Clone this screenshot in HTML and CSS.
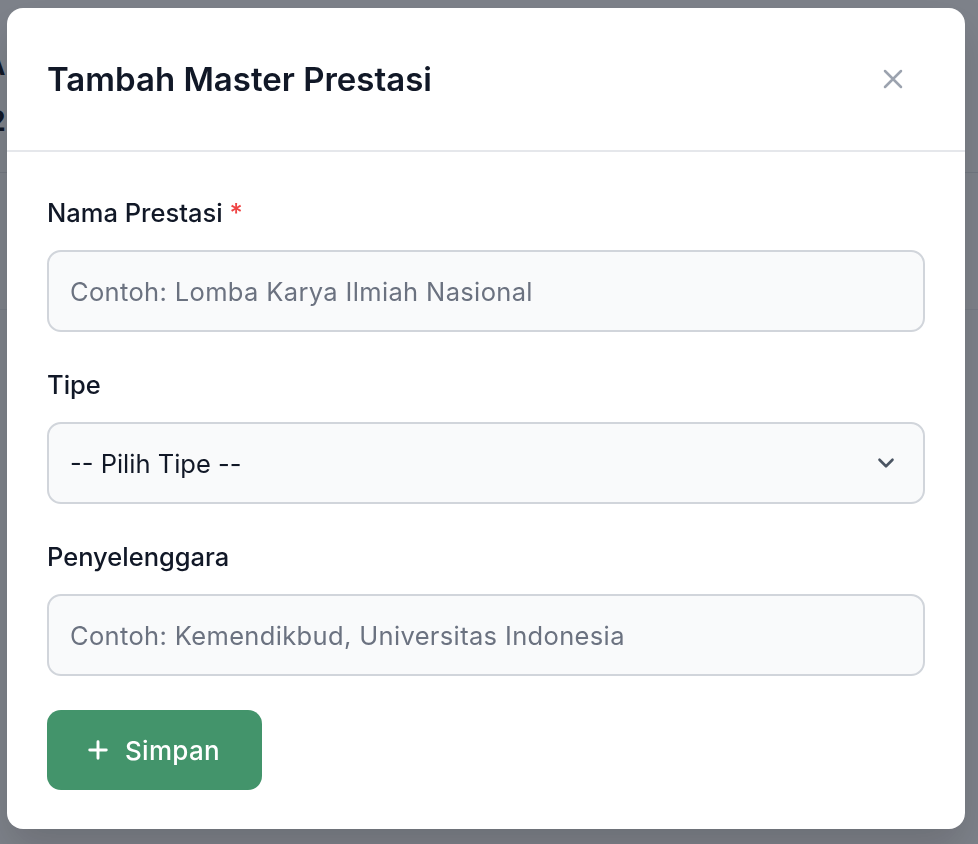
FILE: index.html
```html
<!DOCTYPE html>
<html lang="id">
<head>
  <meta charset="UTF-8">
  <meta name="viewport" content="width=device-width, initial-scale=1.0">
  <title>Master Prestasi</title>
  <link rel="stylesheet" href="styles.css">
</head>
<body>
  <div class="page">
    <div class="page-top">
      <span class="page-title">A</span>
      <span class="page-count">2</span>
    </div>
    <div class="page-bar"></div>
  </div>

  <div class="overlay">
    <div class="modal">
      <div class="modal-header">
        <h2>Tambah Master Prestasi</h2>
        <button class="close-btn" aria-label="Tutup">
          <svg width="32" height="32" viewBox="0 0 24 24" fill="none" stroke="currentColor" stroke-width="1.9" stroke-linecap="round"><path d="M6 6l12 12M18 6L6 18"/></svg>
        </button>
      </div>

      <form class="modal-body">
        <div class="field">
          <label for="nama">Nama Prestasi <span class="req">*</span></label>
          <input type="text" id="nama" placeholder="Contoh: Lomba Karya Ilmiah Nasional">
        </div>

        <div class="field">
          <label for="tipe">Tipe</label>
          <div class="select-wrap">
            <select id="tipe">
              <option>-- Pilih Tipe --</option>
            </select>
            <svg class="chevron" width="26" height="26" viewBox="0 0 24 24" fill="none" stroke="currentColor" stroke-width="2.4" stroke-linecap="round" stroke-linejoin="round"><path d="M6 9l6 6 6-6"/></svg>
          </div>
        </div>

        <div class="field">
          <label for="penyelenggara">Penyelenggara</label>
          <input type="text" id="penyelenggara" placeholder="Contoh: Kemendikbud, Universitas Indonesia">
        </div>

        <button type="button" class="save-btn">
          <svg width="22" height="22" viewBox="0 0 24 24" fill="none" stroke="currentColor" stroke-width="3.2" stroke-linecap="round"><path d="M12 3v18M3 12h18"/></svg>
          Simpan
        </button>
      </form>
    </div>
  </div>
</body>
</html>
```

FILE: styles.css
```css
body {
  font-family: 'Inter', 'Noto Sans', sans-serif;
  margin: 0;
  padding: 0;
  background: #ffffff;
  color: #111827;
}
.page {
  height: 844px;
  overflow: hidden;
}
.page-top {
  height: 172px;
  border-bottom: 1px solid #e5e7eb;
  position: relative;
}
.page-title {
  position: absolute;
  left: -14px;
  top: 50px;
  font-size: 26px;
  font-weight: 700;
}
.page-count {
  position: absolute;
  left: -12px;
  top: 104px;
  font-size: 28px;
  font-weight: 700;
}
.page-bar {
  height: 136px;
  background: #ffffff;
  border-bottom: 1px solid #eef0f3;
}
.overlay {
  position: fixed;
  inset: 0;
  background: rgba(17, 24, 39, 0.54);
}
.modal {
  position: absolute;
  left: 7px;
  top: 8px;
  width: 958px;
  background: #ffffff;
  border-radius: 16px;
  box-shadow: 0 20px 40px rgba(0,0,0,0.15);
}
.modal-header {
  display: flex;
  align-items: center;
  justify-content: space-between;
  height: 144px;
  padding: 0 56px 0 40px;
  border-bottom: 2px solid #e5e7eb;
  box-sizing: border-box;
}
.modal-header h2 {
  margin: 0;
  font-size: 33px;
  font-weight: 600;
  color: #111827;
}
.close-btn {
  border: none;
  background: none;
  padding: 0;
  color: #9ca3af;
  display: flex;
  cursor: pointer;
}
.modal-body {
  padding: 46px 40px 39px;
  display: flex;
  flex-direction: column;
  gap: 38px;
  margin: 0;
}
.field label {
  display: block;
  font-size: 25.5px;
  line-height: 30px;
  font-weight: 500;
  color: #111827;
  margin-bottom: 22px;
}
.req { color: #ef4444; }
.field input,
.field select {
  display: block;
  width: 100%;
  height: 82px;
  box-sizing: border-box;
  padding: 0 21px;
  font-family: inherit;
  font-size: 25.5px;
  color: #111827;
  background: #f9fafb;
  border: 2px solid #d1d5db;
  border-radius: 14px;
  outline: none;
}
.field input::placeholder {
  color: #6b7280;
  letter-spacing: 0.35px;
}
.select-wrap { position: relative; }
.field select {
  appearance: none;
  -webkit-appearance: none;
}
.chevron {
  position: absolute;
  right: 26px;
  top: 28px;
  color: #4b5563;
  pointer-events: none;
}
.save-btn {
  align-self: flex-start;
  display: flex;
  align-items: center;
  gap: 16px;
  margin-top: -4px;
  height: 80px;
  padding: 0 42px 0 40px;
  background: #43946b;
  color: #ffffff;
  border: none;
  border-radius: 14px;
  font-family: inherit;
  font-size: 26px;
  font-weight: 500;
  letter-spacing: 0.3px;
  cursor: pointer;
}
```
